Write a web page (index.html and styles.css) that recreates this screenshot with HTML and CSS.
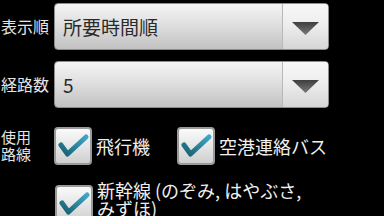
FILE: index.html
```html
<!DOCTYPE html>
<html lang="ja">
<head>
<meta charset="utf-8">
<link rel="stylesheet" href="styles.css">
</head>
<body>
<div class="page">
  <div class="row">
    <div class="label">表示順</div>
    <div class="spinner">
      <div class="spinner-text">所要時間順</div>
      <div class="spinner-arrow"><svg width="27" height="13" viewBox="0 0 27 13"><defs><linearGradient id="ag" x1="0" y1="0" x2="0" y2="1"><stop offset="0" stop-color="#3e3e3e"/><stop offset="1" stop-color="#7a7a7a"/></linearGradient></defs><polygon points="0,0 27,0 13.5,13" fill="url(#ag)"/></svg></div>
    </div>
  </div>
  <div class="row row-second">
    <div class="label">経路数</div>
    <div class="spinner">
      <div class="spinner-text">5</div>
      <div class="spinner-arrow"><svg width="27" height="13" viewBox="0 0 27 13"><polygon points="0,0 27,0 13.5,13" fill="url(#ag)"/></svg></div>
    </div>
  </div>
  <div class="row row-check">
    <div class="label label-multi"><span class="ml">使用</span><span class="ml">路線</span></div>
    <div class="checks">
      <div class="check">
        <div class="box"><svg width="38" height="38" viewBox="0 0 38 38"><defs><linearGradient id="cg" x1="0" y1="1" x2="1" y2="0"><stop offset="0" stop-color="#17606f"/><stop offset="1" stop-color="#3fa6c6"/></linearGradient></defs><polyline points="7,18 13.5,27 32,10" fill="none" stroke="url(#cg)" stroke-width="5" stroke-linecap="round" stroke-linejoin="round"/></svg></div>
        <span class="check-text">飛行機</span>
      </div>
      <div class="check check-second">
        <div class="box"><svg width="38" height="38" viewBox="0 0 38 38"><polyline points="7,18 13.5,27 32,10" fill="none" stroke="url(#cg)" stroke-width="5" stroke-linecap="round" stroke-linejoin="round"/></svg></div>
        <span class="check-text">空港連絡バス</span>
      </div>
      <div class="check check-wide">
        <div class="box"><svg width="38" height="38" viewBox="0 0 38 38"><polyline points="7,18 13.5,27 32,10" fill="none" stroke="url(#cg)" stroke-width="5" stroke-linecap="round" stroke-linejoin="round"/></svg></div>
        <span class="check-text wrap">新幹線 (のぞみ, はやぶさ, みずほ)</span>
      </div>
    </div>
  </div>
</div>
</body>
</html>
```
FILE: styles.css
```css
html, body {
  margin: 0;
  padding: 0;
  background: #000;
  overflow: hidden;
}
body {
  width: 384px;
  height: 216px;
  font-family: "Noto Sans CJK JP", "Noto Sans", sans-serif;
}
.page {
  padding-top: 3px;
}
.row {
  display: flex;
  align-items: center;
}
.row-second {
  margin-top: 11px;
}
.label {
  width: 54px;
  flex: none;
  color: #e4e4e4;
  font-size: 16px;
  line-height: 17px;
  padding-left: 1px;
  box-sizing: border-box;
}
.spinner {
  width: 275px;
  height: 47px;
  box-sizing: border-box;
  display: flex;
  border-radius: 4px;
  border: 1px solid #8c8c8c;
  background: linear-gradient(#f4f4f4, #e2e2e2 40%, #c2c2c2);
  overflow: hidden;
}
.spinner-text {
  flex: 1;
  display: flex;
  align-items: center;
  padding-left: 8px;
  font-size: 19px;
  color: #2a2a2a;
}
.spinner-arrow {
  width: 46px;
  flex: none;
  display: flex;
  align-items: center;
  justify-content: center;
  padding-top: 4px;
  box-sizing: border-box;
  border-left: 1px solid #b8b8b8;
  background: linear-gradient(#f8f8f8, #ececec 50%, #d6d6d6);
}
.spinner-arrow svg {
  display: block;
}
.row-check {
  align-items: flex-start;
  margin-top: 19px;
}
.label-multi {
  display: flex;
  flex-direction: column;
  padding-top: 1px;
}
.ml {
  display: block;
  font-size: 15px;
  line-height: 17px;
  height: 17px;
}
.checks {
  display: flex;
  flex-wrap: wrap;
  width: 275px;
  row-gap: 20px;
}
.check {
  display: flex;
  align-items: center;
  gap: 4px;
}
.check-second {
  margin-left: 27px;
}
.check-wide {
  width: 275px;
  align-items: flex-start;
  padding-left: 1px;
}
.box {
  width: 38px;
  height: 38px;
  flex: none;
  box-sizing: border-box;
  border: 2px solid #9a9a9a;
  border-radius: 4px;
  background: linear-gradient(#fafafa, #e6e6e6 50%, #cfcfcf);
  position: relative;
}
.box svg {
  position: absolute;
  left: -2px;
  top: -2px;
}
.check-text {
  color: #f0f0f0;
  font-size: 18px;
  line-height: 18px;
}
.wrap {
  word-break: keep-all;
  width: 232px;
  line-height: 18px;
  margin-top: -4px;
}
```
